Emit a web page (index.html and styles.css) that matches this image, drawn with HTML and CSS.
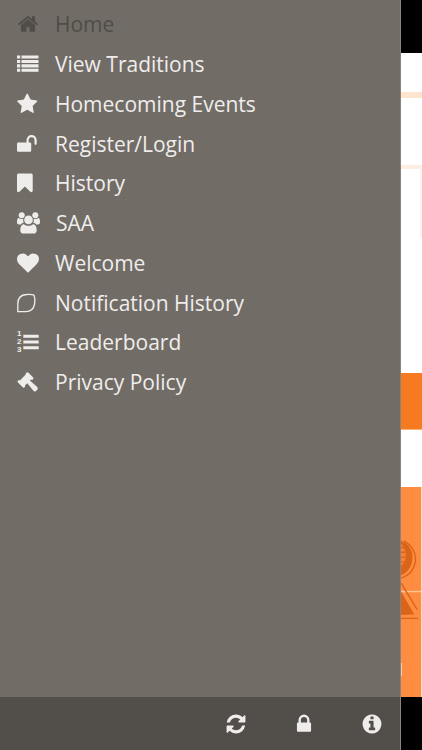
FILE: index.html
```html
<!DOCTYPE html>
<html lang="en">
<head>
<meta charset="utf-8">
<meta name="viewport" content="width=device-width, initial-scale=1">
<title>Menu</title>
<link rel="stylesheet" href="styles.css">
</head>
<body>
<div class="app">
  <aside class="drawer">
    <nav class="menu" aria-label="Main">
      <a class="item current" href="#"><svg class="icon" viewBox="0 0 1792 1792"><path d="M1472 992v480q0 26-19 45t-45 19h-384v-384h-256v384h-384q-26 0-45-19t-19-45v-480q0-1 .5-3t.5-3l575-474 575 474q1 2 1 6zm223-69l-62 74q-8 9-21 11h-3q-13 0-21-7l-692-577-692 577q-12 8-24 7-13-2-21-11l-62-74q-8-10-7-23.5t11-21.5l719-599q32-26 76-26t76 26l244 204v-195q0-14 9-23t23-9h192q14 0 23 9t9 23v408l219 182q10 8 11 21.5t-7 23.5z"/></svg><span>Home</span></a>
      <a class="item" href="#"><svg class="icon" viewBox="0 0 22 22"><path d="M0 2.5h3.2v3.1H0zM4.5 2.5h17v3.1h-17zM0 6.9h3.2V10H0zM4.5 6.9h17V10h-17zM0 11.3h3.2v3.1H0zM4.5 11.3h17v3.1h-17zM0 15.7h3.2v3.1H0zM4.5 15.7h17v3.1h-17z"/></svg><span>View Traditions</span></a>
      <a class="item" href="#"><svg class="icon" viewBox="64 0 1792 1792"><path d="M1728 647q0 22-26 48l-363 354 86 500q1 7 1 20 0 21-10.5 35.5t-30.5 14.5q-19 0-40-12l-449-236-449 236q-22 12-40 12-21 0-31.5-14.5t-10.5-35.5q0-6 2-20l86-500-364-354q-25-27-25-48 0-37 56-46l502-73 225-455q19-41 49-41t49 41l225 455 502 73q56 9 56 46z"/></svg><span>Homecoming Events</span></a>
      <a class="item" href="#"><svg class="icon" viewBox="0 0 22 22"><rect y="9.6" width="14.2" height="9.2" rx="1.2"/><path class="line thick" d="M10.6 10V7.2a4 4 0 0 1 8 0v3.6"/></svg><span>Register/Login</span></a>
      <a class="item" href="#"><svg class="icon" viewBox="256 0 1792 1792"><path d="M1420 128q23 0 44 9 33 13 52.5 41t19.5 62v1289q0 34-19.5 62t-52.5 41q-19 8-44 8-48 0-83-32l-441-424-441 424q-36 33-83 33-23 0-44-9-33-13-52.5-41t-19.5-62v-1289q0-34 19.5-62t52.5-41q21-9 44-9h1048z"/></svg><span>History</span></a>
      <a class="item" href="#"><svg class="icon wide" viewBox="0 0 23 22"><circle cx="4.7" cy="3.3" r="3"/><circle cx="18.3" cy="3.3" r="3"/><path d="M0 10.5C0 7.500.4 6 1.600 6 3 7.200 5 7.200 6.400 6.800 6 8.500 6.200 9.800 6.800 11 5.500 11 4.500 11.500 3.800 12.400H2C.8 12.400 0 11.800 0 10.500zM23 10.500C23 7.500 22.600 6 21.400 6 20 7.200 18 7.200 16.600 6.800 17 8.500 16.800 9.800 16.200 11 17.500 11 18.500 11.500 19.200 12.400H21C22.200 12.400 23 11.800 23 10.500z"/><circle cx="11.500" cy="7.900" r="4.300"/><path d="M3.300 18.500C3.300 14.500 4.600 12.200 7 12.200 9.500 14.300 13.500 14.300 16 12.200 18.400 12.200 19.700 14.500 19.700 18.500 19.700 20.500 18.500 21.600 16.600 21.600H6.400C4.500 21.600 3.300 20.500 3.300 18.500z"/></svg><span>SAA</span></a>
      <a class="item" href="#"><svg class="icon" viewBox="0 0 1792 1792"><path d="M896 1664q-26 0-44-18l-624-602q-10-8-27.500-26t-55.500-65.500-68-97.500-53.500-121-23.500-138q0-220 127-344t351-124q62 0 126.500 21.500t120 58 95.500 68.500 76 68q36-36 76-68t95.500-68.500 120-58 126.500-21.500q224 0 351 124t127 344q0 221-229 450l-623 600q-18 18-44 18z"/></svg><span>Welcome</span></a>
      <a class="item" href="#"><svg class="icon" viewBox="0 0 22 22"><path class="line" d="M.8 19.600V12C.8 6 4.500 2.800 9.500 2.500 12.500 2.200 15 2.400 17 3.200 18.200 6 18.200 9 17.600 12 16.600 17 13.500 19.600 9 19.600z"/></svg><span>Notification History</span></a>
      <a class="item" href="#"><svg class="icon" viewBox="0 0 22 22"><path d="M6.300 3.700h15.400v3H6.300zM6.300 9.500h15.400v3H6.300zM6.300 15.300h15.400v3H6.300z"/><g class="digits"><text x="0" y="5">1</text><text x="0" y="13">2</text><text x="0" y="21">3</text></g></svg><span>Leaderboard</span></a>
      <a class="item" href="#"><svg class="icon" viewBox="0 0 22 22"><path d="M9.300 1.700Q10.400.6 11.500 1.700L16 6.200Q17 7.300 15.900 8.400 14.900 9.200 14 8.500L12.900 9.600 20 15.800Q21.700 17.300 20.300 18.800L19 20Q17.600 21.200 16.200 19.600L10.300 12.200 7.900 14.500Q8.600 15.400 7.700 16.200 6.600 17.200 5.500 16.100L1 11.600Q0 10.500 1.100 9.500 2 8.600 2.900 9.400L8.700 3.600Q8.400 2.600 9.300 1.700z"/></svg><span>Privacy Policy</span></a>
    </nav>
    <div class="toolbar">
      <button class="tool" type="button" aria-label="Refresh"><svg class="icon" viewBox="0 0 1792 1792"><path d="M1639 1056q0 5-1 7-64 268-268 434.500t-478 166.500q-146 0-282.500-55t-243.500-157l-129 129q-19 19-45 19t-45-19-19-45v-448q0-26 19-45t45-19h448q26 0 45 19t19 45-19 45l-137 137q71 66 161 102t187 36q134 0 250-65t186-179q11-17 53-117 8-23 30-23h192q13 0 22.500 9.500t9.500 22.500zm25-800v448q0 26-19 45t-45 19h-448q-26 0-45-19t-19-45 19-45l138-138q-148-137-349-137-134 0-250 65t-186 179q-11 17-53 117-8 23-30 23h-199q-13 0-22.500-9.500t-9.500-22.500v-7q65-268 270-434.500t480-166.500q146 0 284 55.500t245 156.500l130-129q19-19 45-19t45 19 19 45z"/></svg></button>
      <button class="tool" type="button" aria-label="Lock"><svg class="icon" viewBox="0 0 1792 1792"><path d="M640 768h512v-192q0-106-75-181t-181-75-181 75-75 181v192zm832 96v576q0 40-28 68t-68 28h-960q-40 0-68-28t-28-68v-576q0-40 28-68t68-28h32v-192q0-184 132-316t316-132 316 132 132 316v192h32q40 0 68 28t28 68z"/></svg></button>
      <button class="tool" type="button" aria-label="Information"><svg class="icon" viewBox="0 0 1792 1792"><path d="M1152 1376v-160q0-14-9-23t-23-9h-96v-512q0-14-9-23t-23-9h-320q-14 0-23 9t-9 23v160q0 14 9 23t23 9h96v320h-96q-14 0-23 9t-9 23v160q0 14 9 23t23 9h448q14 0 23-9t9-23zm-128-896v-160q0-14-9-23t-23-9h-192q-14 0-23 9t-9 23v160q0 14 9 23t23 9h192q14 0 23-9t9-23zm640 416q0 209-103 385.500t-279.500 279.500-385.500 103-385.500-103-279.500-279.500-103-385.500 103-385.500 279.500-279.500 385.500-103 385.500 103 279.500 279.500 103 385.500z"/></svg></button>
    </div>
  </aside>
  <main class="page">
    <div class="status"></div>
    <div class="header"></div>
    <div class="card"><div class="photo"></div></div>
    <div class="banner"></div>
    <div class="gap"></div>
    <div class="tile">
      <svg class="emblem" viewBox="0 0 21 90" aria-hidden="true">
        <path class="dark" d="M0 2C8 5 13 12 12 21 11 30 6 36 0 38z"/>
        <path class="light" d="M0 5C3 8 5 12 5 17 5 22 3 26 0 28z"/>
        <path class="rule" d="M0 9h4M0 14h5M0 19h5M0 24h3"/>
        <path class="rule" d="M3 2C12 7 16 15 15 24 13 34 7 39 0 41"/>
        <path class="pale" d="M0 55h21"/>
        <path class="dark" d="M0 55L14 79H0V76H7L0 64z"/>
        <path class="dark" d="M0 57L8 79H0z"/>
        <path class="rule" d="M0 46L17 74M0 83h18"/>
      </svg>
      <div class="caption"></div>
    </div>
    <div class="bottom"></div>
  </main>
</div>
</body>
</html>
```

FILE: styles.css
```css
* {
  box-sizing: border-box;
}

body {
  margin: 0;
  background: #fff;
  font-family: "Open Sans", "Noto Sans", sans-serif;
}

.app {
  display: flex;
  min-height: 100vh;
}

.drawer {
  flex: 1;
  display: flex;
  flex-direction: column;
  background: #716c66;
  border-right: 1px solid #88837e;
  color: #efedec;
}

.menu {
  flex: 1;
  display: grid;
  grid-auto-rows: 5.3vh;
  padding: 1px 0 0 4px;
}

.item {
  display: flex;
  align-items: center;
  gap: 16px;
  padding: 8px 13px 0;
  border-bottom: 1px solid #736e68;
  color: inherit;
  font-size: 21px;
  line-height: 30px;
  text-decoration: none;
}

.item:last-child {
  border-bottom-color: transparent;
}

.current {
  color: #504c47;
}

.icon {
  display: block;
  flex: none;
  width: 22px;
  height: 22px;
  fill: currentColor;
  overflow: visible;
}

.wide {
  width: 23px;
}

.line {
  fill: none;
  stroke: currentColor;
  stroke-width: 1.3;
}

.thick {
  stroke-width: 2.2;
  stroke-linecap: round;
}

.digits {
  font-family: "Liberation Sans", sans-serif;
  font-size: 8px;
  font-weight: 700;
}

.toolbar {
  display: flex;
  justify-content: flex-end;
  gap: 24px;
  height: 53px;
  padding: 0 6px;
  background: #524e49;
}

.tool {
  display: flex;
  align-items: center;
  justify-content: center;
  width: 44px;
  padding: 0;
  border: 0;
  background: none;
  color: #efedec;
}

.page {
  flex: none;
  display: flex;
  flex-direction: column;
  width: 5%;
  background: #fff;
}

.status {
  height: 53px;
  background: #000;
}

.header {
  height: 45px;
  border-bottom: 6px solid #ffe5ce;
}

.card {
  flex: 1;
  padding-top: 67px;
}

.photo {
  height: 73px;
  border-top: 4px solid #feeee2;
  border-right: 2px solid #fff4ec;
}

.banner {
  height: 57px;
  border-bottom: 1px solid #fbb27a;
  background: #f57a20;
}

.gap {
  height: 57px;
}

.tile {
  height: 210px;
  padding-top: 50px;
  border-right: 1px solid #ffd9bd;
  background: #ff8d41;
}

.emblem {
  display: block;
  width: 100%;
  height: 90px;
}

.dark {
  fill: #d9641a;
}

.light {
  fill: #f58238;
}

.rule {
  fill: none;
  stroke: #d9641a;
  stroke-width: 1.5;
}

.pale {
  stroke: #ffc394;
  stroke-width: 1.5;
}

.caption {
  width: 1px;
  height: 13px;
  margin-top: 36px;
  background: #ffc9a0;
}

.bottom {
  height: 53px;
  background: #000;
}
```
